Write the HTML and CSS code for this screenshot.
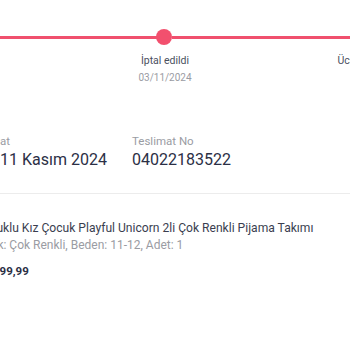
FILE: index.html
```html
<!DOCTYPE html>
<html lang="tr">
<head>
<meta charset="utf-8">
<link rel="stylesheet" href="styles.css">
</head>
<body>
<div class="page">
  <div class="tracker">
    <div class="step">
      <div class="track"><span class="seg"></span><span class="dot"></span><span class="seg"></span></div>
      <div class="step-title">Sipariş alındı</div>
      <div class="step-date">01/11/2024</div>
    </div>
    <div class="step">
      <div class="track"><span class="seg"></span><span class="dot"></span><span class="seg"></span></div>
      <div class="step-title">İptal edildi</div>
      <div class="step-date">03/11/2024</div>
    </div>
    <div class="step">
      <div class="track"><span class="seg"></span><span class="dot"></span><span class="seg"></span></div>
      <div class="step-title">Ücret iadesi</div>
    </div>
  </div>

  <div class="info">
    <div class="col col-first">
      <div class="label label-first">Teslimat</div>
      <div class="value">11 Kasım 2024</div>
    </div>
    <div class="col">
      <div class="label">Teslimat No</div>
      <div class="value">04022183522</div>
    </div>
  </div>

  <div class="divider"></div>

  <div class="product">
    <div class="p-title">Boncuklu Kız Çocuk Playful Unicorn 2li Çok Renkli Pijama Takımı</div>
    <div class="p-variant">Renk: Çok Renkli, Beden: 11-12, Adet: 1</div>
    <div class="p-price">199,99</div>
  </div>
</div>
</body>
</html>
```

FILE: styles.css
```css
html, body {
  margin: 0;
  padding: 0;
  background: #ffffff;
}
body {
  width: 350px;
  height: 350px;
  overflow: hidden;
  font-family: Roboto, "Liberation Sans", sans-serif;
}
.page {
  width: 350px;
  overflow: hidden;
}
.tracker {
  display: flex;
  width: 600px;
  margin-left: -135px;
  padding-top: 29px;
}
.step {
  width: 200px;
  display: flex;
  flex-direction: column;
  align-items: center;
}
.track {
  width: 100%;
  height: 16px;
  display: flex;
  align-items: center;
}
.seg {
  flex: 1;
  height: 3px;
  background: #f0506e;
}
.dot {
  width: 16px;
  height: 16px;
  border-radius: 50%;
  background: #f2506e;
  margin-left: -2px;
}
.step-title {
  margin-top: 9px;
  font-size: 10.5px;
  line-height: 14px;
  color: #4a4f5e;
}
.step-date {
  margin-top: 3px;
  font-size: 10px;
  line-height: 14px;
  color: #9a9ca3;
}
.info {
  display: flex;
  margin-top: 48px;
}
.col-first {
  width: 132px;
}
.label {
  font-size: 11.5px;
  line-height: 16px;
  color: #9a9ca3;
}
.label-first {
  margin-left: -34px;
}
.value {
  margin-top: 1px;
  font-size: 16px;
  line-height: 20px;
  color: #2b2f45;
}
.divider {
  height: 1px;
  background: #ececec;
  margin-top: 23px;
}
.product {
  padding-top: 26px;
  color: #3a3e4f;
}
.p-title {
  margin-left: -31px;
  font-size: 12.1px;
  line-height: 16px;
  white-space: nowrap;
}
.p-variant {
  margin-left: -23px;
  margin-top: 1px;
  font-size: 12px;
  line-height: 16px;
  color: #9a9ca3;
  white-space: nowrap;
}
.p-price {
  margin-left: -7px;
  margin-top: 10px;
  font-size: 11.5px;
  line-height: 16px;
  font-weight: 700;
  color: #2b2f45;
}
```
